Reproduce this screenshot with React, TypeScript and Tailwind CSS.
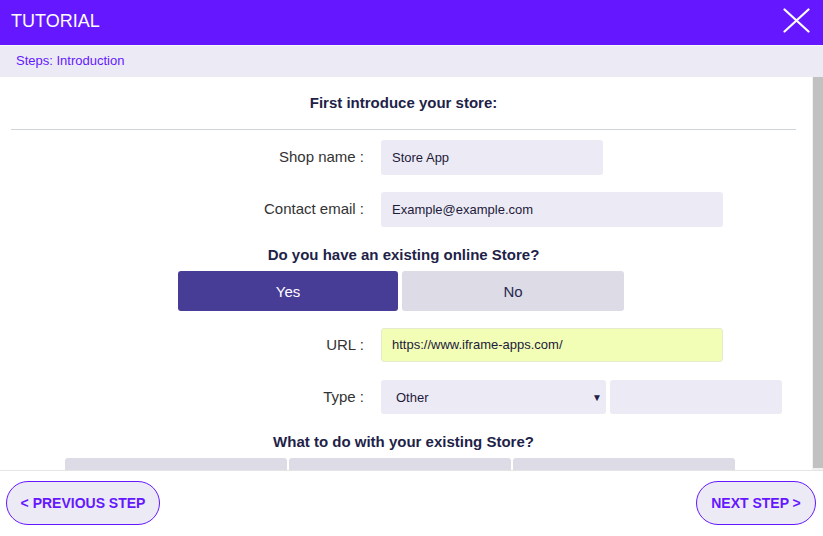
import React, { useState } from 'react';

const font = { fontFamily: '"Liberation Sans", Arial, sans-serif' };

export default function App() {
  const [hasStore, setHasStore] = useState(true);

  return (
    <div className="w-[823px] h-[536px] flex flex-col bg-white overflow-hidden" style={font}>
      {/* header */}
      <div className="h-[45px] shrink-0 bg-[#6518ff] flex items-center justify-between pl-[11px] pr-[13px] pb-[4px]">
        <span className="text-white text-[18px] leading-none">TUTORIAL</span>
        <svg width="27" height="25" viewBox="0 0 27 25" className="text-white">
          <path d="M1.5 1.5 L25.5 23.5 M25.5 1.5 L1.5 23.5" stroke="currentColor" strokeWidth="2.2" strokeLinecap="round" />
        </svg>
      </div>

      {/* steps */}
      <div className="h-[32px] shrink-0 bg-[#ecebf5] flex items-center pl-[16px] pb-[2px] border-t border-[#f6f6fb]">
        <span className="text-[#6518ff] text-[13px]">Steps: Introduction</span>
      </div>

      {/* content + scrollbar */}
      <div className="flex-1 flex min-h-0">
        <div className="flex-1 overflow-hidden pl-[11px] pr-[16px]">
          <div className="h-[52px] flex items-center justify-center">
            <h2 className="text-[15px] font-bold text-[#221f48]">First introduce your store:</h2>
          </div>
          <hr className="border-0 h-px bg-[#d0d5dd]" />

          <div className="grid grid-cols-[353px_1fr] gap-x-[17px] gap-y-[17px] items-center mt-[10px]">
            <label className="text-right text-[15px] text-[#333]">Shop name :</label>
            <div className="w-[222px] h-[35px] bg-[#ecebf5] rounded-[3px] flex items-center pl-[11px] text-[13px] text-[#1d1a3a]">
              Store App
            </div>
            <label className="text-right text-[15px] text-[#333]">Contact email :</label>
            <div className="w-[342px] h-[35px] bg-[#ecebf5] rounded-[3px] flex items-center pl-[11px] text-[13px] text-[#1d1a3a]">
              Example@example.com
            </div>
          </div>

          <div className="h-[44px] flex items-end justify-center pb-[5px]">
            <h3 className="text-[15px] font-bold text-[#221f48]">Do you have an existing online Store?</h3>
          </div>
          <div className="flex justify-center gap-[4px] pr-[5px]">
            <button
              onClick={() => setHasStore(true)}
              className={`w-[220px] h-[40px] rounded-[3px] text-[15px] pt-[2px] ${hasStore ? 'bg-[#483d96] text-white' : 'bg-[#dcdbe6] text-[#2a2850]'}`}
            >
              Yes
            </button>
            <button
              onClick={() => setHasStore(false)}
              className={`w-[222px] h-[40px] rounded-[3px] text-[15px] pt-[2px] ${!hasStore ? 'bg-[#483d96] text-white' : 'bg-[#dcdbe6] text-[#2a2850]'}`}
            >
              No
            </button>
          </div>

          <div className="grid grid-cols-[353px_1fr] gap-x-[17px] gap-y-[18px] items-center mt-[17px]">
            <label className="text-right text-[15px] text-[#333]">URL :</label>
            <div className="w-[342px] h-[34px] bg-[#f2fdb6] border border-[#e6ebd0] rounded-[3px] flex items-center pl-[10px] text-[13px] text-[#1d1a3a]">
              https://www.iframe-apps.com/
            </div>
            <label className="text-right text-[15px] text-[#333]">Type :</label>
            <div className="flex gap-[4px]">
              <div className="w-[225px] h-[34px] bg-[#ecebf5] rounded-[3px] flex items-center justify-between pl-[15px] pr-[4px] text-[13px] text-[#1d1a3a]">
                <span className="pt-px">Other</span>
                <span className="text-[10px] text-[#221f48]">▼</span>
              </div>
              <div className="w-[172px] h-[34px] bg-[#ecebf5] rounded-[3px]" />
            </div>
          </div>

          <div className="h-[44px] flex items-end justify-center pb-[5px]">
            <h3 className="text-[15px] font-bold text-[#221f48]">What to do with your existing Store?</h3>
          </div>
          <div className="flex justify-center gap-[2px] pr-[7px]">
            <button className="w-[222px] h-[40px] rounded-[3px] bg-[#dcdbe6]" />
            <button className="w-[222px] h-[40px] rounded-[3px] bg-[#dcdbe6]" />
            <button className="w-[222px] h-[40px] rounded-[3px] bg-[#dcdbe6]" />
          </div>
        </div>
        <div className="w-[11px] shrink-0 bg-[#f1f1f1] pl-px pb-[2px]">
          <div className="h-full bg-[#c1c1c1]" />
        </div>
      </div>

      {/* footer */}
      <div className="h-[66px] shrink-0 border-t border-[#e5e5e5] flex items-start justify-between pt-[10px] pl-[6px] pr-[7px]">
        <button className="w-[154px] h-[44px] rounded-[22px] border border-[#6518ff] bg-[#ecebf5] text-[#6518ff] text-[14px] font-bold">
          &lt; PREVIOUS STEP
        </button>
        <button className="w-[120px] h-[44px] rounded-[22px] border border-[#6518ff] bg-[#ecebf5] text-[#6518ff] text-[14px] font-bold">
          NEXT STEP &gt;
        </button>
      </div>
    </div>
  );
}
